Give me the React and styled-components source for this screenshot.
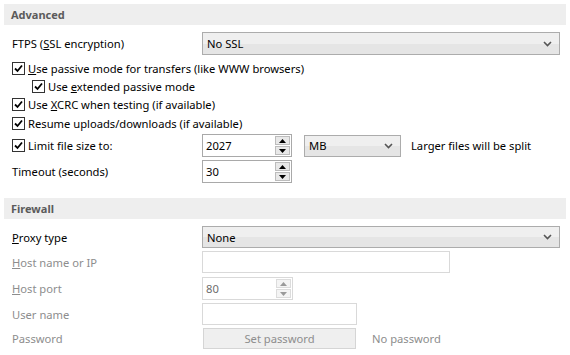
import React from 'react';
import styled, { createGlobalStyle } from 'styled-components';

const GlobalStyle = createGlobalStyle`
  html, body {
    margin: 0;
    padding: 0;
    background: #ffffff;
  }
  body {
    font-family: 'Noto Sans', 'Liberation Sans', sans-serif;
    font-size: 11.2px;
    color: #000;
  }
`;

// 공통 아이콘
const CheckMark = () => (
  <svg width="9" height="9" viewBox="0 0 9 9">
    <path d="M1 4.5 L3.5 7 L8 1.5" fill="none" stroke="#000" strokeWidth="1.8" />
  </svg>
);

const Chevron = () => (
  <svg width="9" height="6" viewBox="0 0 9 6">
    <path d="M1 1 L4.5 4.5 L8 1" fill="none" stroke="#555" strokeWidth="1.6" />
  </svg>
);

const Arrow = ({ down, disabled }) => (
  <svg width="7" height="4" viewBox="0 0 7 4">
    <path
      d={down ? 'M0 0 H7 L3.5 4 Z' : 'M0 4 H7 L3.5 0 Z'}
      fill={disabled ? '#9a9a9a' : '#000'}
    />
  </svg>
);

const SpinBox = ({ value, width, off }) => (
  <Spin $w={width} $off={off}>
    <span>{value}</span>
    <SpinButtons>
      <SpinBtn $off={off}>
        <Arrow disabled={off} />
      </SpinBtn>
      <SpinBtn $off={off}>
        <Arrow down disabled={off} />
      </SpinBtn>
    </SpinButtons>
  </Spin>
);

const Panel = () => (
  <Page>
    <Band>Advanced</Band>

    <Row $h={23} $mt={7}>
      <Label>
        FTPS (<u>S</u>SL encryption)
      </Label>
      <Select $w={358} $h={23}>
        <span>No SSL</span>
        <Chevron />
      </Select>
    </Row>

    <CheckRow $mt={4}>
      <Box>
        <CheckMark />
      </Box>
      <span>
        <u>U</u>se passive mode for transfers (like WWW browsers)
      </span>
    </CheckRow>
    <CheckRow $indent={20}>
      <Box>
        <CheckMark />
      </Box>
      <span>
        Use <u>e</u>xtended passive mode
      </span>
    </CheckRow>
    <CheckRow>
      <Box>
        <CheckMark />
      </Box>
      <span>
        Use <u>X</u>CRC when testing (if available)
      </span>
    </CheckRow>
    <CheckRow $mt={1}>
      <Box>
        <CheckMark />
      </Box>
      <span>Resume uploads/downloads (if available)</span>
    </CheckRow>

    <Row $h={23} $mt={2}>
      <Label>
        <CheckInline>
          <Box>
            <CheckMark />
          </Box>
          <span>Limit file size to:</span>
        </CheckInline>
      </Label>
      <SpinBox value="2027" width={90} />
      <Select $w={97} $ml={12} $h={22}>
        <span>MB</span>
        <Chevron />
      </Select>
      <Note>Larger files will be split</Note>
    </Row>

    <Row $h={23} $mt={3}>
      <Label>Timeout (seconds)</Label>
      <SpinBox value="30" width={90} />
    </Row>

    <Band $mt={15}>Firewall</Band>

    <Row $h={22} $mt={7}>
      <Label>
        <u>P</u>roxy type
      </Label>
      <Select $w={358}>
        <span>None</span>
        <Chevron />
      </Select>
    </Row>

    <Row $h={22} $mt={3}>
      <Label $off>
        <u>H</u>ost name or IP
      </Label>
      <Field $w={248} $off />
    </Row>

    <Row $h={23} $mt={4}>
      <Label $off>
        <u>H</u>ost port
      </Label>
      <SpinBox value="80" width={91} off />
    </Row>

    <Row $h={22} $mt={3}>
      <Label $off>User name</Label>
      <Field $w={155} $off />
    </Row>

    <Row $h={21} $mt={3}>
      <Label $off>Password</Label>
      <Button disabled>Set password</Button>
      <Note $off $ml={16}>No password</Note>
    </Row>
  </Page>
);

export default function App() {
  return (
    <>
      <GlobalStyle />
      <Panel />
    </>
  );
}

// styled component

const Page = styled.div`
  width: 570px;
  height: 355px;
  padding: 4px 0 0 4px;
  box-sizing: border-box;
  display: flex;
  flex-direction: column;
  overflow: hidden;
`;

const Band = styled.div`
  width: 562px;
  height: 21px;
  margin-top: ${(p) => p.$mt || 0}px;
  flex-shrink: 0;
  background: #eeeeee;
  color: #5b5b5b;
  font-weight: bold;
  font-size: 11px;
  display: flex;
  align-items: center;
  padding-left: 7px;
  box-sizing: border-box;
`;

const Row = styled.div`
  display: flex;
  align-items: center;
  height: ${(p) => p.$h}px;
  margin-top: ${(p) => p.$mt || 0}px;
  padding-left: 8px;
  flex-shrink: 0;
`;

const Label = styled.div`
  width: 190px;
  flex-shrink: 0;
  color: ${(p) => (p.$off ? '#8d8d8d' : '#000')};
  white-space: nowrap;
`;

const CheckRow = styled.div`
  display: flex;
  align-items: center;
  gap: 3px;
  height: 18px;
  margin-top: ${(p) => p.$mt || 0}px;
  padding-left: ${(p) => 8 + (p.$indent || 0)}px;
  flex-shrink: 0;
  white-space: nowrap;
`;

const CheckInline = styled.div`
  display: flex;
  align-items: center;
  gap: 3px;
`;

const Box = styled.div`
  width: 13px;
  height: 13px;
  box-sizing: border-box;
  border: 1px solid #333333;
  background: #ffffff;
  display: flex;
  align-items: center;
  justify-content: center;
  flex-shrink: 0;
`;

const Select = styled.div`
  width: ${(p) => p.$w}px;
  height: ${(p) => p.$h || 22}px;
  margin-left: ${(p) => p.$ml || 0}px;
  box-sizing: border-box;
  border: 1px solid #acacac;
  background: linear-gradient(#efefef 0%, #efefef 50%, #e5e5e5 50%, #e5e5e5 100%);
  display: flex;
  align-items: center;
  justify-content: space-between;
  padding: 0 7px 0 4px;
  flex-shrink: 0;
`;

const Spin = styled.div`
  width: ${(p) => p.$w}px;
  height: 23px;
  box-sizing: border-box;
  border: 1px solid ${(p) => (p.$off ? '#d9d9d9' : '#a9a9a9')};
  background: #fff;
  color: ${(p) => (p.$off ? '#6d6d6d' : '#000')};
  display: flex;
  align-items: center;
  justify-content: space-between;
  padding: 0 1px 0 3px;
  flex-shrink: 0;
`;

const SpinButtons = styled.div`
  display: flex;
  flex-direction: column;
  gap: 1px;
`;

const SpinBtn = styled.div`
  width: 15px;
  height: 9px;
  box-sizing: border-box;
  border: 1px solid ${(p) => (p.$off ? '#dcdcdc' : '#bcbcbc')};
  background: ${(p) => (p.$off ? '#f4f4f4' : '#e8e8e8')};
  display: flex;
  align-items: center;
  justify-content: center;
`;

const Field = styled.div`
  width: ${(p) => p.$w}px;
  height: 22px;
  box-sizing: border-box;
  border: 1px solid ${(p) => (p.$off ? '#d9d9d9' : '#a9a9a9')};
  background: #fff;
  flex-shrink: 0;
`;

const Button = styled.button`
  width: 153px;
  height: 21px;
  margin-left: 1px;
  box-sizing: border-box;
  border: 1px solid #d5d5d5;
  background: #efefef;
  color: #8d8d8d;
  font-family: inherit;
  font-size: 11.2px;
  padding: 0;
  flex-shrink: 0;
`;

const Note = styled.span`
  margin-left: ${(p) => p.$ml || 10}px;
  color: ${(p) => (p.$off ? '#8d8d8d' : '#000')};
  white-space: nowrap;
`;
